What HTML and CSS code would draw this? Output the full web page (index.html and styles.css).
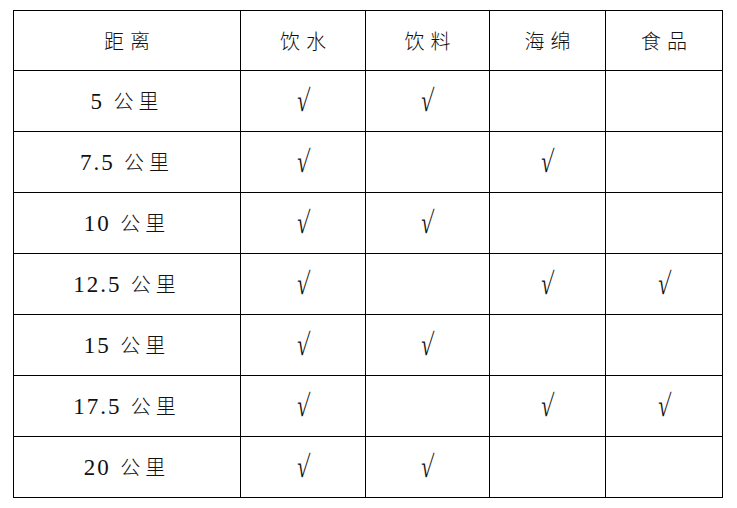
FILE: index.html
```html
<!DOCTYPE html>
<html lang="zh">
<head>
<meta charset="utf-8">
<link rel="stylesheet" href="styles.css">
</head>
<body>
<table class="grid">
  <colgroup>
    <col class="c1"><col class="c2"><col class="c3"><col class="c4"><col class="c5">
  </colgroup>
  <tr class="head"><td>距离</td><td>饮水</td><td>饮料</td><td>海绵</td><td>食品</td></tr>
  <tr><td><span class="num">5</span> 公里</td><td class="ck"><span>√</span></td><td class="ck"><span>√</span></td><td></td><td></td></tr>
  <tr><td><span class="num">7.5</span> 公里</td><td class="ck"><span>√</span></td><td></td><td class="ck"><span>√</span></td><td></td></tr>
  <tr><td><span class="num">10</span> 公里</td><td class="ck"><span>√</span></td><td class="ck"><span>√</span></td><td></td><td></td></tr>
  <tr><td><span class="num">12.5</span> 公里</td><td class="ck"><span>√</span></td><td></td><td class="ck"><span>√</span></td><td class="ck"><span>√</span></td></tr>
  <tr><td><span class="num">15</span> 公里</td><td class="ck"><span>√</span></td><td class="ck"><span>√</span></td><td></td><td></td></tr>
  <tr><td><span class="num">17.5</span> 公里</td><td class="ck"><span>√</span></td><td></td><td class="ck"><span>√</span></td><td class="ck"><span>√</span></td></tr>
  <tr><td><span class="num">20</span> 公里</td><td class="ck"><span>√</span></td><td class="ck"><span>√</span></td><td></td><td></td></tr>
</table>
</body>
</html>
```

FILE: styles.css
```css
html, body {
  margin: 0;
  padding: 0;
  background: #fff;
}
body {
  padding: 10px 0 0 13px;
  font-family: "Noto Sans CJK SC", sans-serif;
  font-weight: 300;
  color: #111;
}
.grid {
  border-collapse: collapse;
  table-layout: fixed;
  width: 709px;
}
.c1 { width: 227px; }
.c2 { width: 125px; }
.c3 { width: 124px; }
.c4 { width: 116px; }
.c5 { width: 117px; }
.grid td {
  border: 1px solid #000;
  height: 60px;
  padding: 0;
  text-align: center;
  vertical-align: middle;
  font-size: 20px;
  letter-spacing: 5px;
  line-height: 1;
}
.grid tr:first-child td {
  height: 59px;
}
.head td {
  letter-spacing: 6px;
  text-indent: 6px;
}
.num {
  font-family: "Liberation Serif", serif;
  letter-spacing: 2px;
  font-size: 23px;
}
.grid td.ck {
  font-family: "Liberation Serif", serif;
  font-size: 22px;
  letter-spacing: 0;
}
.ck span {
  display: inline-block;
  transform: scale(1, 1.4) skewX(-8deg);
  font-weight: 400;
  color: #111;
}
```
